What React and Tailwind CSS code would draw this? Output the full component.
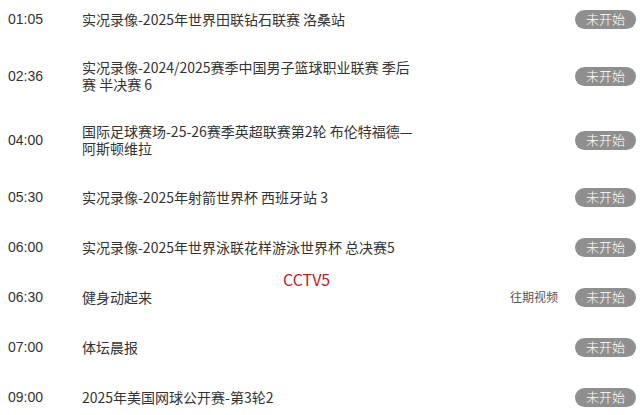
import React from 'react';

const programs = [
  { time: '01:05', title: '实况录像-2025年世界田联钻石联赛 洛桑站' },
  { time: '02:36', title: '实况录像-2024/2025赛季中国男子篮球职业联赛 季后赛 半决赛 6' },
  { time: '04:00', title: '国际足球赛场-25-26赛季英超联赛第2轮 布伦特福德—阿斯顿维拉' },
  { time: '05:30', title: '实况录像-2025年射箭世界杯 西班牙站 3' },
  { time: '06:00', title: '实况录像-2025年世界泳联花样游泳世界杯 总决赛5' },
  { time: '06:30', title: '健身动起来', replay: true },
  { time: '07:00', title: '体坛晨报' },
  { time: '09:00', title: '2025年美国网球公开赛-第3轮2' },
];

export default function App() {
  return (
    <div className="relative h-[415px] w-[640px] overflow-hidden bg-white font-['Noto_Sans_CJK_SC',sans-serif] text-[#333]">
      <ul className="mt-[-6px]">
        {programs.map((p) => (
          <li key={p.time} className="flex items-center py-[15px]">
            <span className="w-[82px] shrink-0 pl-[8px] font-['Liberation_Sans',Arial,sans-serif] text-[14px] leading-[20px] text-[#333]">
              {p.time}
            </span>
            <span className="w-[333px] shrink-0 text-[14px] leading-[17px] text-[#333]">{p.title}</span>
            <div className="flex flex-1 items-center justify-end gap-[17px] pr-[4px]">
              {p.replay && <span className="text-[12px] leading-[20px] text-[#555]">往期视频</span>}
              <span className="flex h-[19px] w-[61px] items-center justify-center rounded-full bg-[#8f8f8f] text-[13px] font-light text-white">
                未开始
              </span>
            </div>
          </li>
        ))}
      </ul>
      {/* channel watermark */}
      <span className="absolute left-[283px] top-[269px] text-[16px] leading-[20px] text-[#c8161d]">CCTV5</span>
    </div>
  );
}
